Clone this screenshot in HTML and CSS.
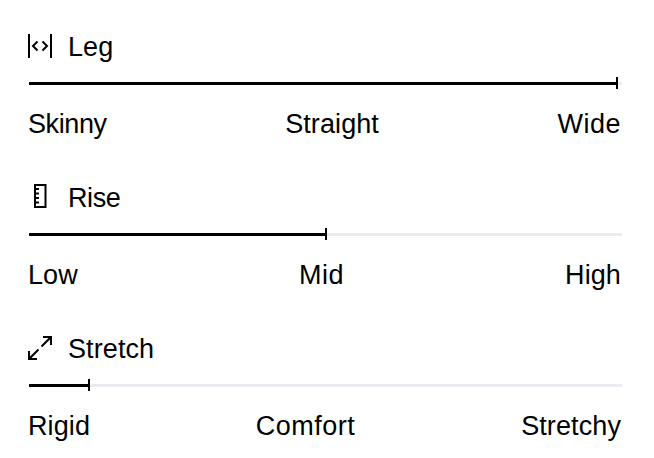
FILE: index.html
```
<!DOCTYPE html>
<html lang="en">

<head>
    <meta charset="UTF-8">
    <meta name="viewport" content="width=device-width, initial-scale=1.0">
    <title>Fit Guide</title>
    <link rel="stylesheet" href="styles.css">
</head>

<body>
    <div class="fit-guide">
        <!-- Leg -->
        <div class="fit-item">
            <div class="fit-title">
                <svg class="icon" viewBox="0 0 24 24">
                    <path d="M1 0v24M23 0v24M9.500 7.500L5 12l4.500 4.500M14.500 7.500L19 12l-4.500 4.500" />
                </svg>
                <span>Leg</span>
            </div>
            <div class="track">
                <div class="fill" style="width: 589px"></div>
            </div>
            <div class="labels">
                <span class="tight">Skinny</span>
                <span>Straight</span>
                <span class="loose">Wide</span>
            </div>
        </div>

        <!-- Rise -->
        <div class="fit-item">
            <div class="fit-title">
                <svg class="icon" viewBox="0 0 24 24">
                    <path d="M7 0h10.500v22H7zM7 4h4M7 8.500h4M7 13h4M7 17.500h4" />
                </svg>
                <span class="tight">Rise</span>
            </div>
            <div class="track">
                <div class="fill" style="width: 298px"></div>
            </div>
            <div class="labels">
                <span>Low</span>
                <span class="loose">Mid</span>
                <span>High</span>
            </div>
        </div>

        <!-- Stretch -->
        <div class="fit-item">
            <div class="fit-title">
                <svg class="icon" viewBox="0 0 24 24">
                    <path d="M15 1h8v8M23 1l-9.500 9.500M1 15v8h8M1 23l9.500-9.500" />
                </svg>
                <span>Stretch</span>
            </div>
            <div class="track">
                <div class="fill" style="width: 61px"></div>
            </div>
            <div class="labels">
                <span>Rigid</span>
                <span class="loose">Comfort</span>
                <span>Stretchy</span>
            </div>
        </div>
    </div>
</body>

</html>
```
FILE: styles.css
```
* {
    margin: 0;
    padding: 0;
    box-sizing: border-box;
}

body {
    font-family: "Liberation Sans", Arial, sans-serif;
    font-size: 27px;
    line-height: 32px;
    letter-spacing: 0.1px;
    background-color: #fff;
    color: #000;
}

.fit-guide {
    padding: 30px 32px 0 28px;
}

.fit-item {
    height: 151px;
}

.fit-item:last-child {
    height: auto;
}

.fit-title {
    display: flex;
    align-items: flex-start;
    gap: 16px;
    height: 32px;
}

.fit-title span {
    padding-top: 1px;
}

.icon {
    width: 24px;
    height: 24px;
    margin-top: 4px;
    fill: none;
    stroke: #000;
    stroke-width: 2;
    overflow: visible;
}

.track {
    height: 3px;
    margin: 20px 0 23px 1px;
    background-color: #ebebf0;
}

.fill {
    position: relative;
    height: 3px;
    background-color: #000;
}

/* end marker */
.fill::after {
    content: "";
    position: absolute;
    right: 0;
    top: -5px;
    width: 2px;
    height: 12px;
    background-color: #000;
}

.labels {
    display: flex;
    justify-content: space-between;
    padding-right: 1px;
}

.tight {
    letter-spacing: -0.4px;
}

.loose {
    letter-spacing: 0.5px;
}
```
